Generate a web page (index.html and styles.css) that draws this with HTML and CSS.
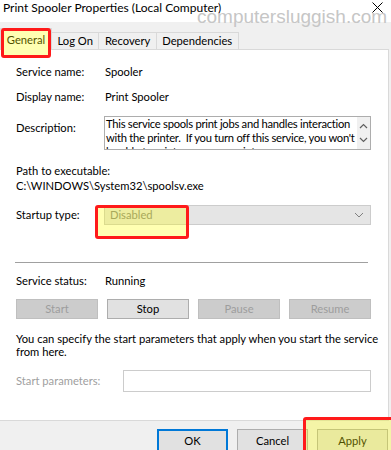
FILE: index.html
```html
<!DOCTYPE html>
<html lang="en">
<head>
  <meta charset="UTF-8">
  <title>Print Spooler Properties (Local Computer)</title>
  <link rel="stylesheet" href="styles.css">
</head>
<body>
  <div class="titlebar">
    <span class="title">Print Spooler Properties (Local Computer)</span>
    <svg class="close" width="11" height="11" viewBox="0 0 11 11"><path d="M0.5 0.5 L10.5 10.5 M10.5 0.5 L0.5 10.5" stroke="#000" stroke-width="1" fill="none"/></svg>
  </div>
  <div class="watermark">computersluggish.com</div>

  <div class="tabs">
    <div class="tab active">General</div>
    <div class="tab">Log On</div>
    <div class="tab">Recovery</div>
    <div class="tab">Dependencies</div>
  </div>

  <div class="panel">
    <div class="row first">
      <div class="label">Service name:</div>
      <div>Spooler</div>
    </div>
    <div class="row second">
      <div class="label">Display name:</div>
      <div>Print Spooler</div>
    </div>
    <div class="row desc-row">
      <div class="label">Description:</div>
      <div class="desc">
        <div class="desc-text">This service spools print jobs and handles interaction<br>with the printer.&nbsp; If you turn off this service, you won't<br>be able to print or see your printers.</div>
        <div class="scroll">
          <svg width="9" height="6" viewBox="0 0 9 6"><path d="M1 5 L4.5 1.5 L8 5" stroke="#606060" stroke-width="1.2" fill="none"/></svg>
          <svg width="9" height="6" viewBox="0 0 9 6"><path d="M1 1 L4.5 4.5 L8 1" stroke="#606060" stroke-width="1.2" fill="none"/></svg>
        </div>
      </div>
    </div>
    <div class="path-label">Path to executable:</div>
    <div class="path">C:\WINDOWS\System32\spoolsv.exe</div>
    <div class="row startup">
      <div class="label">Startup type:</div>
      <div class="select">
        <span>Disabled</span>
        <svg width="10" height="6" viewBox="0 0 10 6"><path d="M1 1 L5 5 L9 1" stroke="#808080" stroke-width="1" fill="none"/></svg>
      </div>
    </div>
    <div class="sep"></div>
    <div class="row status">
      <div class="label">Service status:</div>
      <div>Running</div>
    </div>
    <div class="buttons">
      <div class="btn disabled">Start</div>
      <div class="btn">Stop</div>
      <div class="btn disabled">Pause</div>
      <div class="btn disabled">Resume</div>
    </div>
    <p class="hint">You can specify the start parameters that apply when you start the service<br>from here.</p>
    <div class="row params">
      <div class="label params-label">Start parameters:</div>
      <div class="input"></div>
    </div>
  </div>

  <div class="footer">
    <div class="btn foot ok">OK</div>
    <div class="btn foot">Cancel</div>
    <div class="btn foot">Apply</div>
  </div>

  <div class="mark mark-tab"></div>
  <div class="mark mark-startup"></div>
  <div class="mark mark-apply"></div>
</body>
</html>
```
FILE: styles.css
```css
* {
  box-sizing: border-box;
}

body {
  margin: 0;
  width: 391px;
  height: 450px;
  overflow: hidden;
  position: relative;
  background: #f0f0f0;
  font-family: Lato, "Noto Sans", sans-serif;
  font-size: 11.2px;
  color: #000;
}

.titlebar {
  height: 22px;
  background: #fff;
  display: flex;
  align-items: flex-start;
  justify-content: space-between;
  padding: 0 8px 0 3px;
}

.title {
  font-size: 12px;
  line-height: 15px;
}

.close {
  margin-top: 2px;
}

.watermark {
  position: absolute;
  left: 197px;
  top: 6px;
  font-family: "Liberation Sans", Arial, sans-serif;
  font-size: 19px;
  color: #c6c6c6;
}

.tabs {
  display: flex;
  align-items: flex-end;
  height: 27px;
}

.tab {
  height: 17px;
  line-height: 16px;
  padding: 0 5.5px;
  border: 1px solid #d9d9d9;
  border-bottom: none;
  margin-left: -1px;
}

.tab.active {
  position: relative;
  z-index: 2;
  height: 22px;
  width: 52px;
  text-align: center;
  margin-left: 0;
  margin-bottom: -1px;
  padding-top: 3px;
  background: #fff;
}

.panel {
  width: 389px;
  height: 372px;
  background: #fff;
  border: 1px solid #d9d9d9;
  border-left: none;
  padding: 0 17px 0 16px;
}

.row {
  display: flex;
  align-items: center;
  line-height: 14px;
}

.label {
  width: 89px;
  flex: none;
}

.first {
  margin-top: 15px;
}

.second {
  margin-top: 11px;
}

.desc-row {
  margin-top: 12px;
  align-items: flex-start;
}

.desc-row .label {
  padding-top: 5px;
}

.desc {
  margin-left: -1px;
  width: 267px;
  height: 34px;
  border: 1px solid #adadad;
  display: flex;
  overflow: hidden;
}

.desc-text {
  flex: 1;
  padding: 0 0 0 1px;
  white-space: nowrap;
  overflow: hidden;
  line-height: 14px;
  letter-spacing: -0.26px;
}

.scroll {
  width: 13px;
  flex: none;
  background: #f0f0f0;
  display: flex;
  flex-direction: column;
  align-items: center;
  justify-content: space-between;
  padding: 6px 0 6px;
}

.path-label {
  margin-top: 14px;
  line-height: 14px;
}

.path {
  margin-top: 1px;
  line-height: 14px;
}

.startup {
  margin-top: 12px;
}

.select {
  margin-left: -1px;
  width: 268px;
  height: 20px;
  background: #e5e5e5;
  border: 1px solid #cccccc;
  color: #838383;
  display: flex;
  align-items: center;
  justify-content: space-between;
  padding: 0 6px 0 5px;
}

.sep {
  margin: 37px 0 0 -1px;
  width: 353px;
  height: 1px;
  background: #a0a0a0;
}

.status {
  margin-top: 11px;
}

.buttons {
  margin-top: 11px;
  width: 355px;
  display: flex;
  justify-content: space-between;
}

.btn {
  width: 82px;
  height: 20px;
  line-height: 18px;
  text-align: center;
  background: #e1e1e1;
  border: 1px solid #adadad;
}

.btn.disabled {
  background: #cccccc;
  border-color: #bfbfbf;
  color: #9d9d9d;
}

.hint {
  margin: 13px 0 0;
  line-height: 13px;
  white-space: nowrap;
}

.params {
  margin-top: 12px;
}

.params-label {
  width: 107px;
  color: #a0a0a0;
}

.input {
  width: 249px;
  height: 22px;
  border: 1px solid #cccccc;
  background: #fff;
}

.footer {
  display: flex;
  gap: 9px;
  padding: 8px 0 0 157px;
}

.btn.foot {
  width: 71px;
  height: 23px;
  line-height: 21px;
}

.btn.ok {
  border: 2px solid #0078d7;
  line-height: 19px;
}

.mark {
  position: absolute;
  z-index: 5;
  border: 3px solid #ff1a1a;
  border-radius: 3px;
  background: rgba(255, 255, 0, 0.3);
}

.mark-tab {
  left: 1px;
  top: 28px;
  width: 50px;
  height: 30px;
}

.mark-startup {
  left: 95px;
  top: 205px;
  width: 94px;
  height: 34px;
}

.mark-apply {
  left: 303px;
  top: 417px;
  width: 92px;
  height: 40px;
}
```
